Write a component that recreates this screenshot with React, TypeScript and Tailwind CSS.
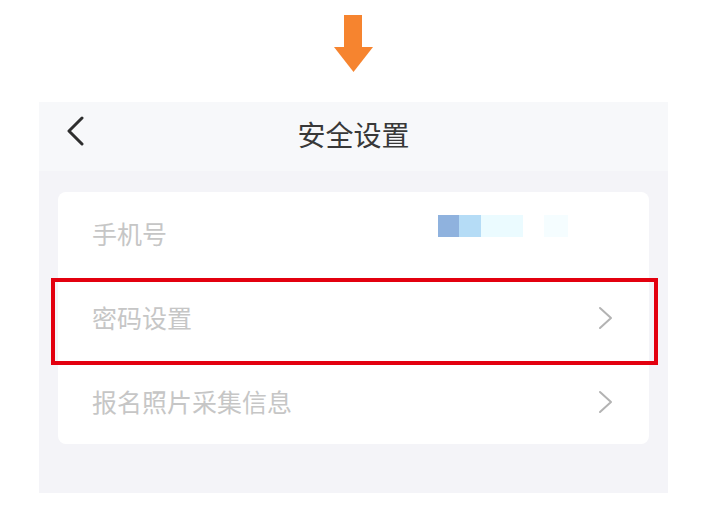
const rows = [
  { label: "手机号", arrow: false },
  { label: "密码设置", arrow: true },
  { label: "报名照片采集信息", arrow: true },
];

const ChevronRight = () => (
  <svg width="16" height="24" viewBox="0 0 16 24" fill="none">
    <polyline
      points="2,2 13,12 2,22"
      stroke="#b3b3b3"
      strokeWidth="2"
      strokeLinecap="round"
      strokeLinejoin="round"
    />
  </svg>
);

const PhoneMask = () => (
  <div className="flex items-center h-[22px]">
    <span className="w-[21px] h-full bg-[#8fb2de]" />
    <span className="w-[22px] h-full bg-[#b5dcf6]" />
    <span className="w-[42px] h-full bg-[#ebfbff]" />
    <span className="w-[21px] h-full" />
    <span className="w-[24px] h-full bg-[#f5fdff]" />
  </div>
);

export default function App() {
  return (
    <div
      className="w-[701px] h-[505px] bg-white"
      style={{ fontFamily: '"Noto Sans CJK SC", "Noto Sans", sans-serif' }}
    >
      <div className="ml-[39px] w-[629px] h-[102px] pt-[15px] flex justify-center">
        <svg width="40" height="57" viewBox="0 0 40 57">
          <rect x="10" y="0" width="18" height="33" fill="#f6842f" />
          <polygon points="0,32 39,32 19.5,57" fill="#f6842f" />
        </svg>
      </div>

      <div className="ml-[39px] w-[629px] bg-[#f4f4f8]">
        <div className="relative h-[69px] bg-[#f7f8fa] flex items-center justify-center">
          <svg
            className="absolute left-[27px] top-[14px]"
            width="20"
            height="30"
            viewBox="0 0 20 30"
          >
            <polyline
              points="16,2 3,15 16,28"
              fill="none"
              stroke="#2e2e2e"
              strokeWidth="3"
              strokeLinecap="round"
              strokeLinejoin="round"
            />
          </svg>
          <span className="text-[28px] leading-none text-[#383838] -mt-[5px]">
            安全设置
          </span>
        </div>

        <div className="pt-[21px] pb-[49px] px-[19px]">
          <div className="relative bg-white rounded-[8px]">
            {rows.map((row) => (
              <div
                key={row.label}
                className="h-[84px] flex items-center justify-between pl-[34px] pr-[35px]"
              >
                <span className="text-[25px] leading-none text-[#c6c6c6] -mt-[2px]">
                  {row.label}
                </span>
                {row.arrow ? (
                  <ChevronRight />
                ) : (
                  <div className="mr-[46px] -mt-[17px]">
                    <PhoneMask />
                  </div>
                )}
              </div>
            ))}
            <div className="absolute left-[-7px] top-[86px] w-[607px] h-[87px] border-[4px] border-[#e3000f]" />
          </div>
        </div>
      </div>
    </div>
  );
}
